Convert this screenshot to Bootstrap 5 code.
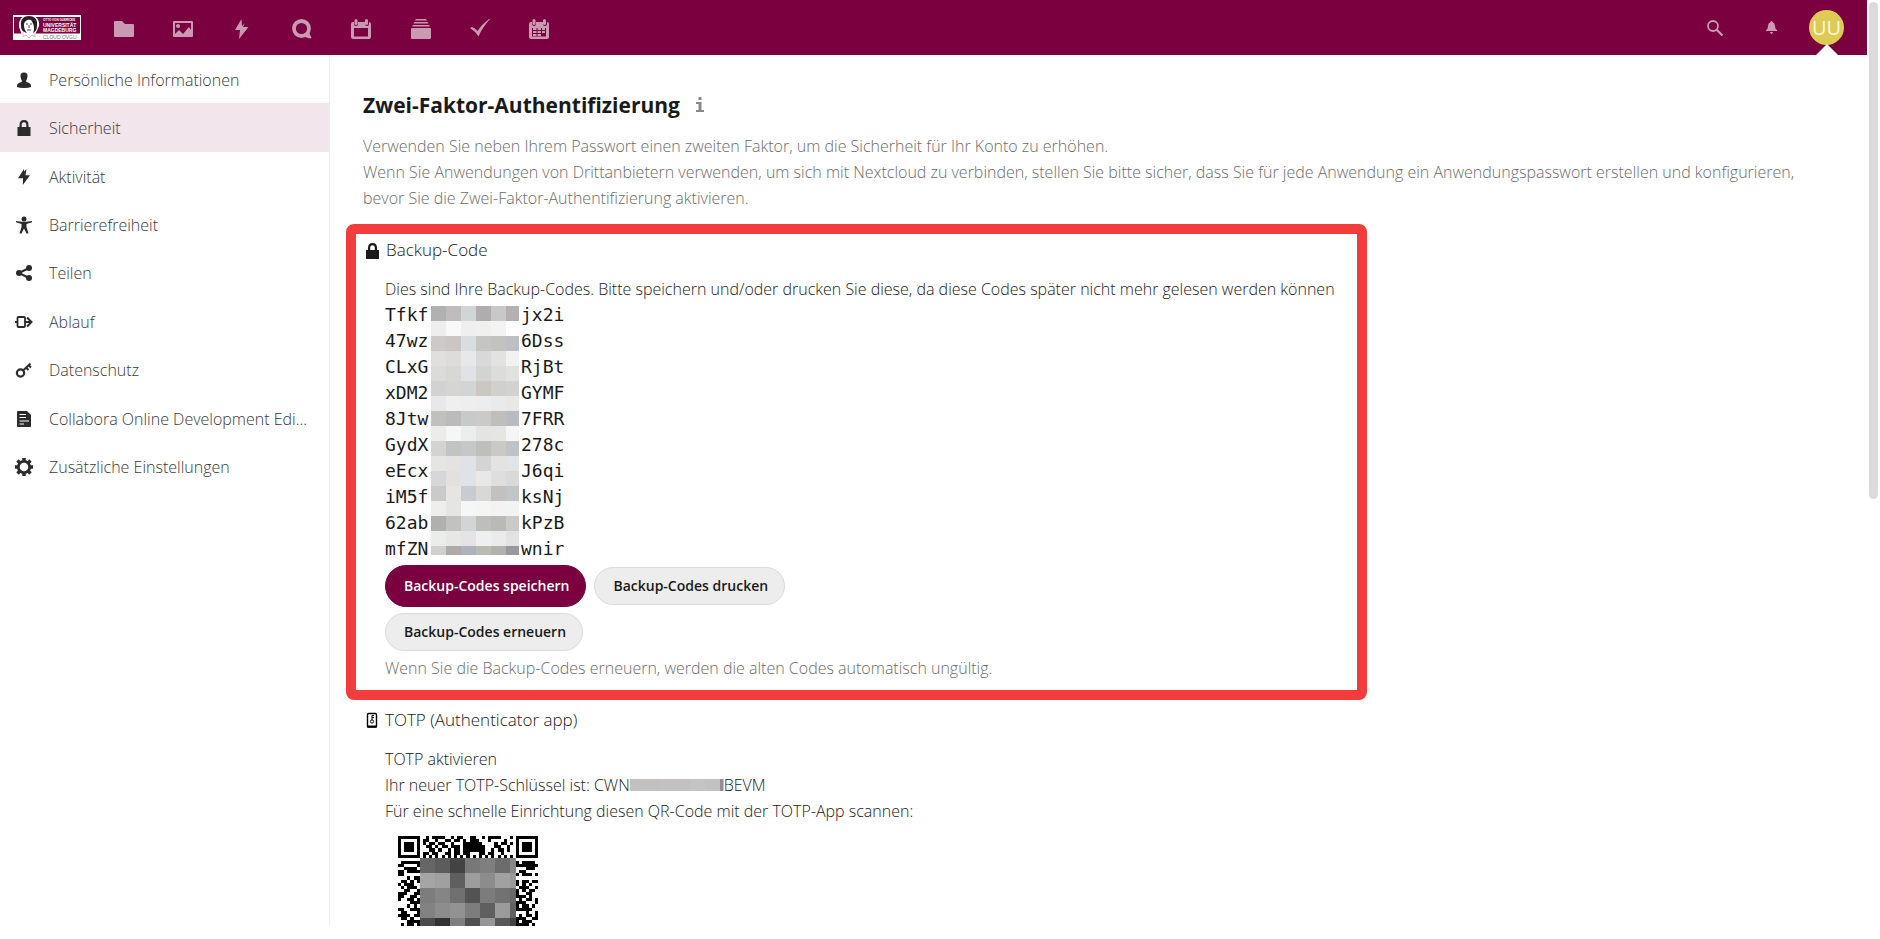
<!DOCTYPE html>
<html lang="de">
<head>
<meta charset="utf-8">
<meta name="viewport" content="width=device-width, initial-scale=1">
<title>Sicherheit – Einstellungen</title>
<link rel="stylesheet" href="https://cdn.jsdelivr.net/npm/bootstrap@5.3.0/dist/css/bootstrap.min.css">
<style>
  :root { --brand: #7a003f; --ink: #1a1a1a; --muted: #6c6c6c; }
  body { font-family: "Open Sans", "Noto Sans", sans-serif; font-size: 16px; font-weight: 335; line-height: 26px; color: var(--ink); height: 100vh; overflow: hidden; }
  .shell { height: calc(100vh - 13px); }
  .topbar { height: 55px; background: var(--brand); color: #ca99b2; padding: 0 23px 0 13px; }
  .topbar a, .topbar button { color: inherit; }
  .brandlink { margin-right: 13px; }
  .apps { width: 475px; }
  .iconbtn { width: 56px; height: 55px; }
  .account { height: 55px; margin-left: 10px; }
  .avatar { width: 35px; height: 35px; background: #ddcb55; font-size: 20px; font-weight: 400; line-height: 35px; }
  .topbar .avatar { color: #fbf6dc; }
  .pointer { left: 50%; bottom: 0; margin-left: -11px; border: 11px solid transparent; border-top: 0; border-bottom-color: #fff; }
  .side { width: 330px; border-right: 1px solid #ededed; }
  .side ul { min-height: 436px; }
  .side a { color: #3a3a3a; padding: 1px 15px 0; gap: 16px; }
  .side a.active { background: #f2e5eb; }
  .side svg { color: #2b2b2b; flex: none; }
  .content { padding: 33px 33px 0; }
  .content h2 { font-size: 21px; line-height: 34px; font-weight: 700; margin: 0 0 11px; }
  .muted { color: var(--muted); }
  .marked { width: 1021px; max-width: 100%; border: 10px solid #f33c3c; border-radius: 8px; margin: 13px 0 7px -17px; padding: 3px 7px 9px; }
  .provider { font-size: 17px; line-height: 26px; font-weight: 335; gap: 7px; margin: 0 0 13px; padding-left: 3px; }
  .indent { padding-left: 22px; }
  .codes { font-family: "DejaVu Sans Mono", monospace; font-size: 18px; font-weight: 400; }
  .codes li { display: grid; grid-template-columns: 136px auto; justify-content: start; height: 26px; }
  .pixels { left: 46px; top: 4px; }
  .pill { font-size: 14px; line-height: 20px; font-weight: 600; padding: 8px 16px 8px 18px; border: 1px solid #dbdbdb; border-radius: 40px; background: #ededed; color: var(--ink); }
  .pill-main { background: var(--brand); border-color: var(--brand); color: #fff; padding: 10px 16px 10px 18px; }
  .row-btns { gap: 8px; margin: 3px 0 6px; }
  .scrollrail { width: 13px; padding: 2px 2px 0; }
  .thumb { height: 497px; background: #dbdbdb; border-radius: 5px; }
  .qrcode { margin: 12px 0 0 13px; }
</style>
</head>
<body class="d-flex bg-white">
<div class="shell d-flex flex-column flex-grow-1 overflow-hidden">
  <header class="topbar d-flex align-items-center flex-shrink-0">
    <a class="brandlink d-flex" href="#" aria-label="Startseite">
      <svg width="68" height="25" viewBox="0 0 68 25">
        <rect width="68" height="25" fill="#fff"/>
        <rect x="1" y="2" width="66" height="16.500" fill="#7a003f"/>
        <path d="M9 20 6 12Q5 1 16 0Q27 1 26 11L22 20Z" fill="#fff"/>
        <path d="M8 11C7 4 11 1 16 1C22 1 25 5 24 11C24 15 22 17 20 18C22 14 21 9 18 5C15 4 11 6 11 10C11 13 12 16 14 18C10 17 8 15 8 11Z" fill="#222"/>
        <path d="M13 9h2M17 9h2M16 10v3M14 15h4" stroke="#444" fill="none"/>
        <path d="M10 17v5l3-2 3 3 3-3 3 2v-5" stroke="#c9c2c6" fill="none"/>
        <g font-family="Liberation Sans, sans-serif" font-weight="700" fill="#fff">
          <text x="30" y="6" font-size="3">OTTO VON GUERICKE</text>
          <text x="30" y="12" font-size="5">UNIVERSITÄT</text>
          <text x="30" y="17" font-size="5">MAGDEBURG</text>
        </g>
        <text x="30" y="24" font-family="Liberation Sans, sans-serif" font-size="5" fill="#777">CLOUD.OVGU</text>
      </svg>
    </a>
    <ul class="apps list-unstyled d-flex m-0">
      <li class="flex-fill text-center"><a href="#" aria-label="Dateien"><svg width="20" height="20" viewBox="0 0 20 20" fill="currentColor"><path d="M1 2q-1 0-1 1v14q0 1 1 1h18q1 0 1-1V6q0-1-1-1h-8L8 2Z"/></svg></a></li>
      <li class="flex-fill text-center"><a href="#" aria-label="Fotos"><svg width="20" height="20" viewBox="0 0 20 20" fill="currentColor"><path fill-rule="evenodd" d="M1 2h18q1 0 1 1v14q0 1-1 1H1q-1 0-1-1V3q0-1 1-1Zm1 2v11l4-4 4 4 6-7 2 3V4Z"/><circle cx="5" cy="7" r="2"/></svg></a></li>
      <li class="flex-fill text-center"><a href="#" aria-label="Aktivität"><svg width="20" height="20" viewBox="0 0 20 20" fill="currentColor"><path d="M9.500 0 3 11h5l-1 9 9.500-12H11l2-4-3 3Z"/></svg></a></li>
      <li class="flex-fill text-center"><a href="#" aria-label="Talk"><svg width="20" height="20" viewBox="0 0 20 20"><circle cx="9.500" cy="9.500" r="7.500" fill="none" stroke="currentColor" stroke-width="3.800"/><path d="M12 17.500 17 13q1 3 2.500 5.500 0 1-1 1Q15 19 12 17.500Z" fill="currentColor"/></svg></a></li>
      <li class="flex-fill text-center"><a href="#" aria-label="Kalender"><svg width="20" height="20" viewBox="0 0 20 20"><use href="#cal"/></svg></a></li>
      <li class="flex-fill text-center"><a href="#" aria-label="Deck"><svg width="20" height="20" viewBox="0 0 20 20" fill="currentColor"><path d="M5 0h10l1 1.500H4ZM3.500 3h13l1 1.500h-15ZM2 6h16l1 1.500H1Z"/><rect y="9" width="20" height="11" rx="1"/></svg></a></li>
      <li class="flex-fill text-center"><a href="#" aria-label="Aufgaben"><svg width="20" height="20" viewBox="0 0 20 20" fill="currentColor"><path d="M20 0Q12 9 8.500 17.500 5 12 0 9L2 8q3 1 5.500 4Q12 5 19 0Z"/></svg></a></li>
      <li class="flex-fill text-center"><a href="#" aria-label="Termine"><svg width="20" height="20" viewBox="0 0 20 20"><use href="#cal"/><path d="M4 10h3.500M8.500 10H12M13 10h3M4 13h3.500M8.500 13H12M13 13h3M4 16h3.500M8.500 16H12" stroke="currentColor" stroke-width="2"/></svg></a></li>
    </ul>
    <div class="ms-auto d-flex align-items-center">
      <button class="iconbtn btn border-0 p-0 d-flex align-items-center justify-content-center" aria-label="Suche"><svg width="16" height="16" viewBox="0 0 16 16" fill="none" stroke="currentColor"><circle cx="6" cy="6" r="5" stroke-width="1.800"/><path d="m9.500 9.500 6 6" stroke-width="2.200"/></svg></button>
      <button class="iconbtn btn border-0 p-0 d-flex align-items-center justify-content-center" aria-label="Benachrichtigungen"><svg width="11" height="13" viewBox="0 0 11 13" fill="currentColor"><path d="M5.500 0Q6.500 0 6.500 1 9 2 9 5q0 3 2 4v1H0V9q2-1 2-4 0-3 2.500-4 0-1 1-1ZM4 11h3q-.5 2-1.500 2T4 11Z"/></svg></button>
      <div class="account position-relative d-flex align-items-center">
        <a href="#" class="avatar rounded-circle d-block text-center text-decoration-none" aria-label="Konto">UU</a>
        <span class="pointer position-absolute"></span>
      </div>
    </div>
  </header>
  <div class="d-flex flex-grow-1 overflow-hidden">
    <nav class="side flex-shrink-0">
      <ul class="list-unstyled d-flex flex-column m-0">
        <li class="flex-fill d-flex"><a class="d-flex align-items-center w-100 text-decoration-none text-nowrap" href="#"><svg width="18" height="18" viewBox="0 0 18 18" fill="currentColor"><path d="M9 1.500q4 0 3.500 4Q12 9 11 10q0 1 2 1.500 3 1 3 3v1.500q-2 1-7 1t-7-1v-1.500q0-2 3-3Q7 11 7 10 6 9 5.500 5.500q-.5-4 3.500-4Z"/></svg>Persönliche Informationen</a></li>
        <li class="flex-fill d-flex"><a class="active d-flex align-items-center w-100 text-decoration-none text-nowrap" href="#" aria-current="page"><svg width="18" height="18" viewBox="0 0 18 18"><use href="#lock"/></svg>Sicherheit</a></li>
        <li class="flex-fill d-flex"><a class="d-flex align-items-center w-100 text-decoration-none text-nowrap" href="#"><svg width="18" height="18" viewBox="0 0 18 18" fill="currentColor"><path d="M9 1 3 10.200H8L7.800 17 15 7.200H10.500L11.500 1 9 3.500Z"/></svg>Aktivität</a></li>
        <li class="flex-fill d-flex"><a class="d-flex align-items-center w-100 text-decoration-none text-nowrap" href="#"><svg width="18" height="18" viewBox="0 0 18 18" fill="currentColor"><circle cx="9" cy="3" r="2.500"/><path d="m1 5 6 .7h4L17 5v1.200L11.500 8v3l2 6.500h-2L9 12.500 6.500 17.500h-2l2-6.500V8L1 6.200Z"/></svg>Barrierefreiheit</a></li>
        <li class="flex-fill d-flex"><a class="d-flex align-items-center w-100 text-decoration-none text-nowrap" href="#"><svg width="18" height="18" viewBox="0 0 18 18" fill="currentColor"><path d="M14 4 4 9l10 5" fill="none" stroke="currentColor" stroke-width="2"/><circle cx="14" cy="4" r="3"/><circle cx="4" cy="9" r="3"/><circle cx="14" cy="14" r="3"/></svg>Teilen</a></li>
        <li class="flex-fill d-flex"><a class="d-flex align-items-center w-100 text-decoration-none text-nowrap" href="#"><svg width="18" height="18" viewBox="0 0 18 18" fill="none" stroke="currentColor" stroke-width="1.800"><rect x="2.500" y="4" width="7.500" height="10" rx="1"/><path d="M0 9h2M10 9h6M12 4.500 16.500 9 12 13.500" stroke-width="2"/></svg>Ablauf</a></li>
        <li class="flex-fill d-flex"><a class="d-flex align-items-center w-100 text-decoration-none text-nowrap" href="#"><svg width="18" height="18" viewBox="0 0 18 18" fill="none" stroke="currentColor"><circle cx="5.500" cy="12" r="3.600" stroke-width="2.200"/><path d="m8 9.500 7.500-7M11 6.500l2.500 2.500M13.500 4l2.500 2.500" stroke-width="2"/></svg>Datenschutz</a></li>
        <li class="flex-fill d-flex"><a class="d-flex align-items-center w-100 text-decoration-none text-nowrap" href="#"><svg width="18" height="18" viewBox="0 0 18 18"><path d="M2 2q0-1 1-1h9l4 4v11q0 1-1 1H3q-1 0-1-1Z" fill="currentColor"/><path d="M4.500 4.500H11M4.500 7.500H11M4.500 11H14M4.500 14H9" stroke="#fff" stroke-width="1.100"/></svg>Collabora Online Development Edi...</a></li>
        <li class="flex-fill d-flex"><a class="d-flex align-items-center w-100 text-decoration-none text-nowrap" href="#"><svg width="18" height="18" viewBox="0 0 18 18" fill="none" stroke="currentColor"><circle cx="9" cy="9" r="5.700" stroke-width="2.800"/><path d="M9 0v3M9 15v3M0 9h3M15 9h3M2.500 2.500l2 2M13.500 13.500l2 2M15.500 2.500l-2 2M4.500 13.500l-2 2" stroke-width="3.400"/></svg>Zusätzliche Einstellungen</a></li>
      </ul>
    </nav>
    <main class="content flex-grow-1">
      <h2 class="d-flex align-items-center">Zwei-Faktor-Authentifizierung
        <a href="#" class="ms-3 d-flex" aria-label="Hilfe"><svg width="12" height="18" viewBox="2 0 12 18" fill="#888"><rect x="4.500" y="1" width="3" height="3"/><path d="M2 6h5.500v8H10v2H1.500v-2H4.500V8H2Z"/></svg></a>
      </h2>
      <p class="muted m-0">Verwenden Sie neben Ihrem Passwort einen zweiten Faktor, um die Sicherheit für Ihr Konto zu erhöhen.<br>Wenn Sie Anwendungen von Drittanbietern verwenden, um sich mit Nextcloud zu verbinden, stellen Sie bitte sicher, dass Sie für jede Anwendung ein Anwendungspasswort erstellen und konfigurieren, bevor Sie die Zwei-Faktor-Authentifizierung aktivieren.</p>

      <section class="marked">
        <h3 class="provider d-flex align-items-center"><svg width="13" height="18" viewBox="2.500 -1 13 18" fill="#000"><use href="#lock"/></svg>Backup-Code</h3>
        <div class="indent">
          <p class="m-0">Dies sind Ihre Backup-Codes. Bitte speichern und/oder drucken Sie diese, da diese Codes später nicht mehr gelesen werden können</p>
          <div class="position-relative">
            <ul class="codes list-unstyled m-0">
              <li><span>Tfkf</span><span>jx2i</span></li>
              <li><span>47wz</span><span>6Dss</span></li>
              <li><span>CLxG</span><span>RjBt</span></li>
              <li><span>xDM2</span><span>GYMF</span></li>
              <li><span>8Jtw</span><span>7FRR</span></li>
              <li><span>GydX</span><span>278c</span></li>
              <li><span>eEcx</span><span>J6qi</span></li>
              <li><span>iM5f</span><span>ksNj</span></li>
              <li><span>62ab</span><span>kPzB</span></li>
              <li><span>mfZN</span><span>wnir</span></li>
            </ul>
            <svg class="pixels position-absolute" id="codeMask" width="88" height="249" shape-rendering="crispEdges"></svg>
          </div>
          <div class="row-btns d-flex align-items-center">
            <button class="pill pill-main">Backup-Codes speichern</button>
            <button class="pill">Backup-Codes drucken</button>
          </div>
          <button class="pill d-block">Backup-Codes erneuern</button>
          <p class="muted m-0 pt-1">Wenn Sie die Backup-Codes erneuern, werden die alten Codes automatisch ungültig.</p>
        </div>
      </section>

      <section>
        <h3 class="provider d-flex align-items-center"><svg width="12" height="18" viewBox="0 -1 12 18" fill="none" stroke="#000"><rect x="1.500" y="1.500" width="9" height="13.500" rx="1" stroke-width="1.400"/><path d="M1 14.500h10" stroke-width="2"/><circle cx="6" cy="9.500" r="1.600"/><path d="M6 8V3.500h2M6 5.500h2"/></svg>TOTP (Authenticator app)</h3>
        <div class="indent">
          <p class="m-0">TOTP aktivieren</p>
          <p class="m-0 d-flex align-items-center">Ihr neuer TOTP-Schlüssel ist: CWN<svg id="keyMask" width="94" height="12" shape-rendering="crispEdges"><rect width="94" height="12" fill="#c3c1c2"/><rect width="30" height="12" fill="#c2c1bf"/><rect x="60" width="15" height="12" fill="#c4c4c2"/><rect x="90" width="3" height="12" fill="#998897"/></svg>BEVM</p>
          <p class="m-0">Für eine schnelle Einrichtung diesen QR-Code mit der TOTP-App scannen:</p>
          <svg class="qrcode d-block" id="qr" width="140" height="140" viewBox="0 0 140 140" role="img" aria-label="QR-Code"></svg>
        </div>
      </section>
    </main>
  </div>
</div>
<div class="scrollrail flex-shrink-0"><div class="thumb"></div></div>

<svg width="0" height="0" class="position-absolute" aria-hidden="true">
  <defs>
    <g id="lock"><path fill="currentColor" d="M9 1Q4.500 1 4.500 6v2H2.500v9h13V8h-2V6Q13.500 1 9 1Zm0 2.200q2.300 0 2.300 2.800v2H6.700V6Q6.700 3.200 9 3.200Z"/></g>
    <g id="cal"><path fill="currentColor" fill-rule="evenodd" d="M2 3q-2 0-2 2v13q0 2 2 2h16q2 0 2-2V5q0-2-2-2v2q0 2-2 2t-2-2V3H7v2q0 2-2 2T3 5V3Zm1 6h14v8.500H3Z"/><rect x="3.500" width="3" height="6" rx="1.500" fill="currentColor"/><rect x="14" width="3" height="6" rx="1.500" fill="currentColor"/></g>
  </defs>
</svg>
<script src="https://cdn.jsdelivr.net/npm/bootstrap@5.3.0/dist/js/bootstrap.bundle.min.js"></script>
<script>
  function rect(x, y, w, h, fill) {
    return '<rect x="' + x + '" y="' + y + '" width="' + w + '" height="' + h + '" fill="#' + fill + '"/>';
  }
  function mosaic(rows, x0, y0, maxW) {
    let out = '';
    rows.forEach((row, r) => row.split(' ').forEach((c, i) => {
      out += rect(x0 + i * 15, y0 + r * 15, Math.min(15, maxW - i * 15), 15, c);
    }));
    return out;
  }
  document.getElementById('codeMask').innerHTML = mosaic([
    'b2b1b1 bebdbb d1d5d8 b0adaf c8c8c8 b4afb3',
    'eeeeee f9f9f9 eeefee f0f0ee f3f3f3 ffffff',
    'cbcac9 cbc6c3 d8dde0 c5c5c2 c2c2c0 bebfc4',
    'e0dfde dedcda e6e8ea d8d8d8 e2e2e1 f2f2f2',
    'dbdbda d7d7d5 e0e2e5 d3d3d2 dcdcdb e0e2e0',
    'd2d2d2 d5d6d4 d3d5d5 cbc8c4 d0d0cf d2d2d3',
    'e8e8e8 efefef eeeeee ededed e9ebea e8e8e7',
    'c0c0bd babbba c8caca cbcac8 bfbebb b9bbc0',
    'ececea f5f6f6 ebeeed e4e4e3 e5e6e3 f5f5f5',
    'd4d3d1 c2c4c3 c6c8c8 bebebb c9c9c6 c0c3c5',
    'e5e5e3 e4e3e1 dfe3e7 d4d4d4 e4e3e1 e3e4e5',
    'd6d7d8 e2e1df dfe2e6 e9e8e6 dededf d9d9d8',
    'cacaca e7e4e1 c8ccd0 d8d8d7 c2c1bf c1c5c8',
    'eeeeed e5e5e4 f5f7f6 f5f5f4 f2f3f2 f2f4f4',
    'b0b0af c2c2c0 d2d5d6 bebebc b9b9b6 cacacb',
    'ebedeb e7e7e6 e4e4e7 edf0ee ebebea e2e2e3',
    'd0d0ce afaaa7 adb2bd babbb5 b1b1b0 9997a0'
  ], 0, 0, 88);

  const dark = [
    '111111100101111001011001100101111000101111111',
    '100000101100100110110101110001000010001000001',
    '101110101011011001000111111000010110101011101',
    '101110100110101101110111111100011001001011101',
    '101110100011010010110111111100101101001011101',
    '100000101101100110110110001101100100001000001',
    '111111101010101010101010101010101010101111111'
  ];
  const sides = [
    ['0000000', '0000000'], ['0111111', '1011110'], ['1100001', '1111111'], ['0011110', '0001110'],
    ['1101111', '0110000'], ['1100000', '1011101'], ['0001011', '0000000'], ['0110101', '1011011'],
    ['1011100', '1010100'], ['0101110', '0111001'], ['0011001', '1010110'], ['1110011', '1001100'],
    ['1100110', '1110100'], ['1001101', '0101101'], ['0000111', '1110001'], ['0001010', '1011010'],
    ['1100111', '1111100'], ['0110001', '0001001'], ['1111011', '0101101'], ['0110100', '1110011'],
    ['0001111', '1011100'], ['0101101', '1111010'], ['0010111', '0110100']
  ];
  sides.forEach(s => dark.push(s[0] + '0'.repeat(31) + s[1]));
  let qr = '<g transform="scale(3.111)" shape-rendering="crispEdges">';
  dark.forEach((row, y) => row.replace(/1+/g, (run, x) => { qr += rect(x, y, run.length, 1, '000'); return run; }));
  qr += '</g><g shape-rendering="crispEdges">' + mosaic([
    '666666 5c5c5c 434343 787878 7f7f7f 6c6c6c 878787',
    'a5a5a5 a0a0a0 5f5f5f 9d9d9d 8c8c8c a1a1a1 999999',
    '7d7d7d 858585 707070 535353 7c7c7c 727272 696969',
    '828282 8d8d8d 929292 7d7d7d 5f5f5f 9b9b9b 616161',
    '4b4b4b 333333 7f7f7f 4f4f4f 969696 585858 434343'
  ], 22, 22, 96) + '</g>';
  document.getElementById('qr').innerHTML = qr;
</script>
</body>
</html>
